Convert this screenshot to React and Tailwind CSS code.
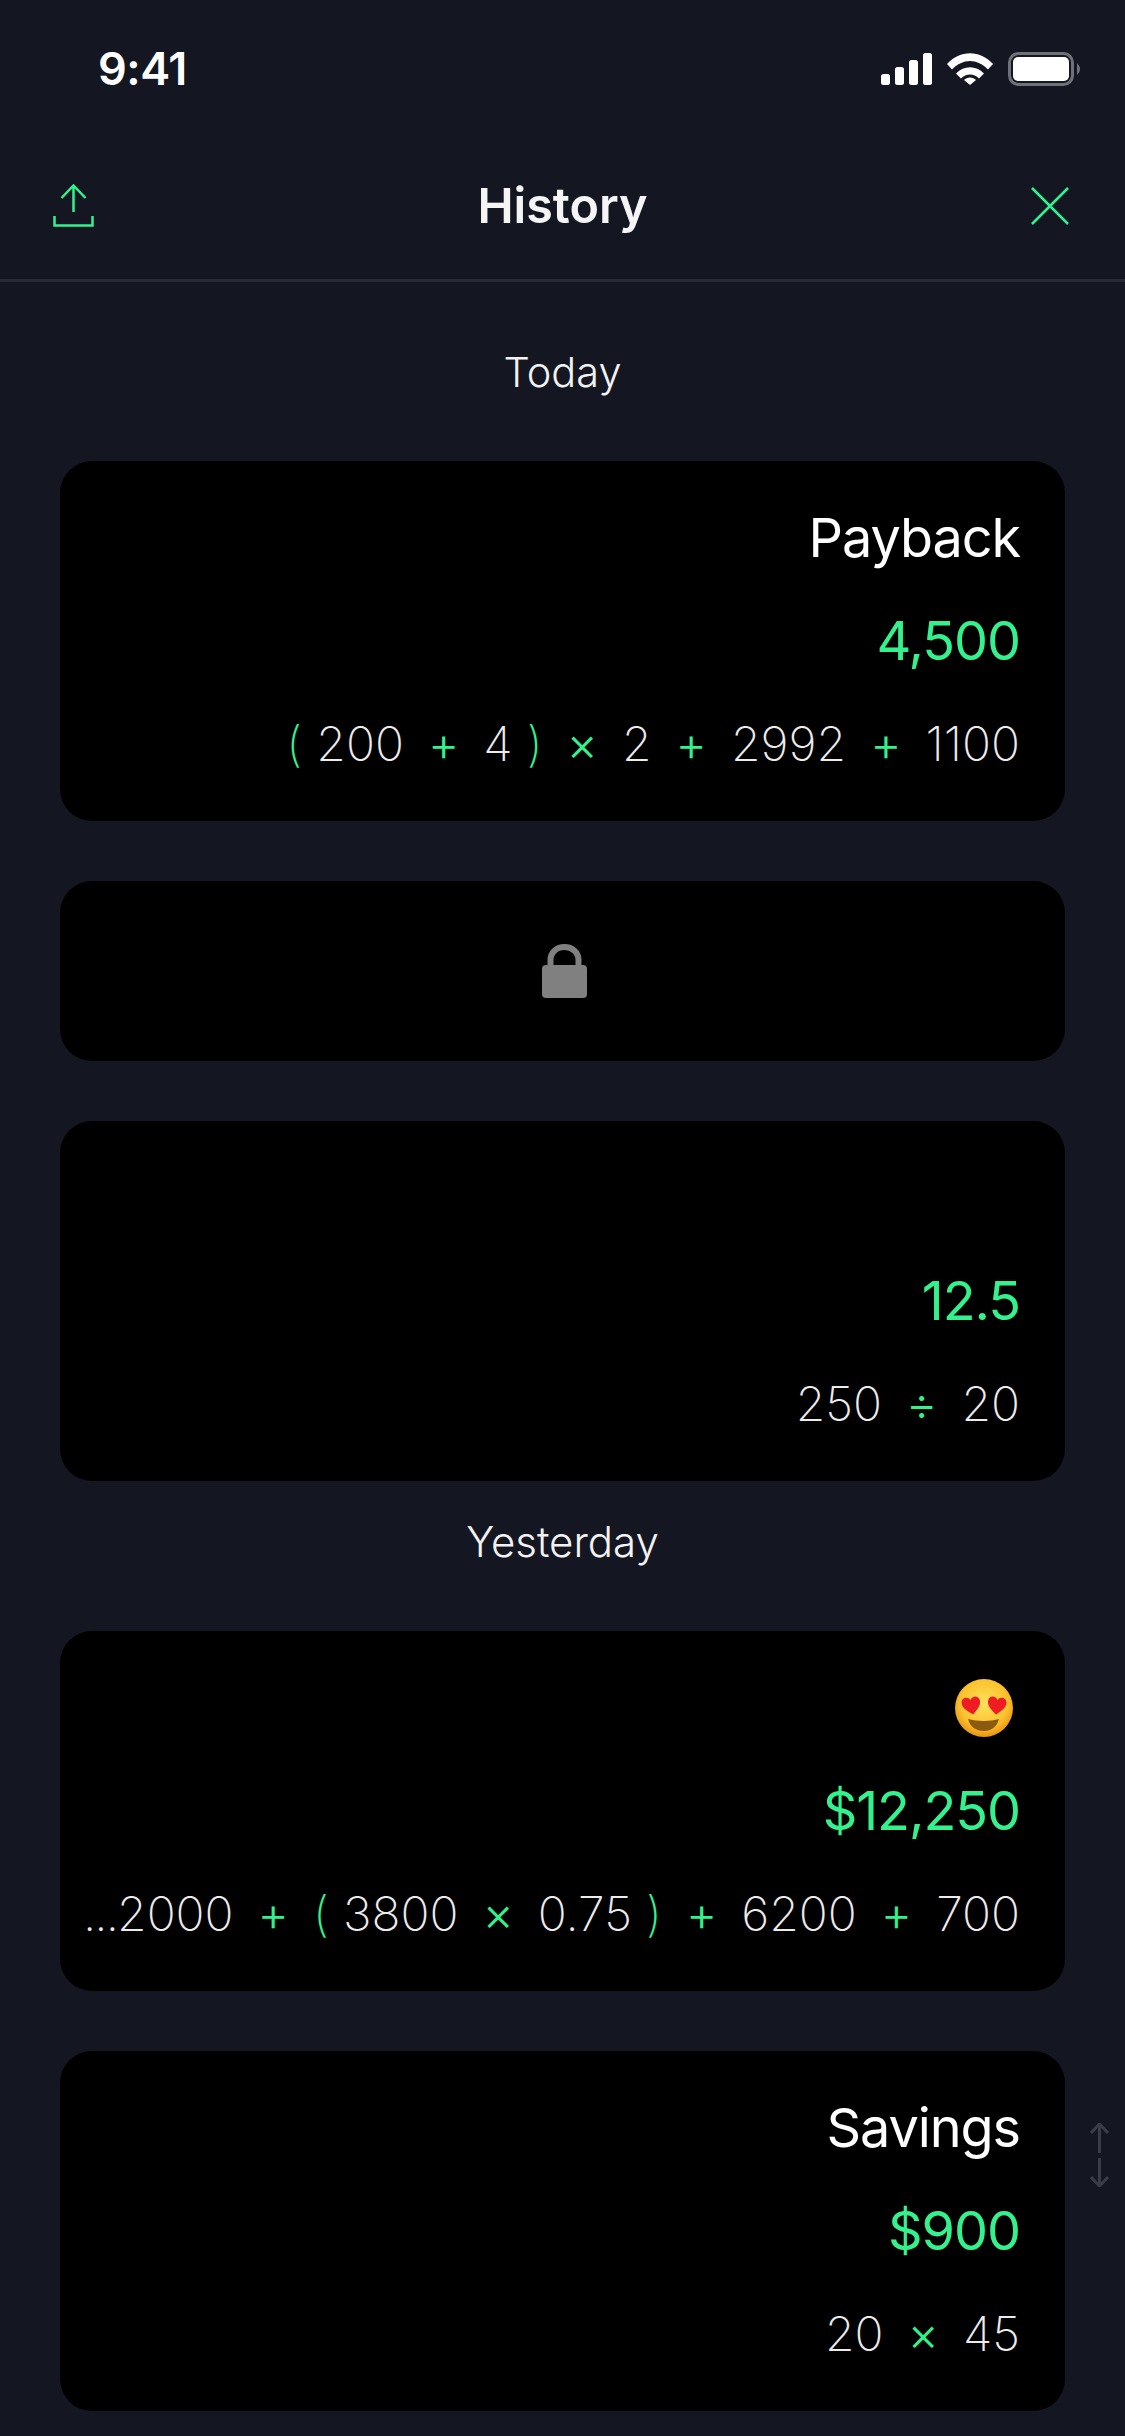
const GREEN = "#33f28e";

function StatusBar() {
  return (
    <div className="flex h-[130px] items-start justify-between pl-[98px] pr-[45px] pt-[42px]">
      <span className="text-[45px] font-semibold leading-[54px] tracking-[-0.01em] text-white">9:41</span>
      <div className="mt-[10px] flex items-start gap-[15px]">
        <svg className="mt-[1px]" width="51" height="32" viewBox="0 0 51 32" fill="#fff">
          <rect x="0" y="21" width="9" height="11" rx="2.500" />
          <rect x="14" y="14" width="9" height="18" rx="2.500" />
          <rect x="28" y="7" width="9" height="25" rx="2.500" />
          <rect x="42" y="0" width="9" height="32" rx="2.500" />
        </svg>
        <svg className="mt-[1px]" width="46" height="32" viewBox="0 0 46 32" fill="#fff">
          <path d="M0 11 C13 -3.500 33 -3.500 46 11 L41 16.500 C30 5 16 5 5 16.500 Z" />
          <path d="M9 20.500 C17 12 29 12 37 20.500 L32 25.500 C27 20 19 20 14 25.500 Z" />
          <path d="M23 32 L17 27 C20 23.500 26 23.500 29 27 Z" />
        </svg>
        <svg width="72" height="34" viewBox="0 0 72 34" fill="none">
          <rect x="1.500" y="1.500" width="63" height="31" rx="9" stroke="#6f7178" strokeWidth="3" />
          <rect x="5" y="5" width="56" height="24" rx="5" fill="#fff" />
          <path d="M69 11 C71 13 72 15 72 17 C72 19 71 21 69 23 Z" fill="#6f7178" />
        </svg>
      </div>
    </div>
  );
}

function NavBar() {
  return (
    <div className="flex h-[152px] items-center justify-between border-b-[3px] border-[#272b36] pl-[53px] pr-[56px] pt-[2px]">
      <svg width="41" height="43" viewBox="0 0 41 43" fill="none" stroke={GREEN} strokeWidth="2.500">
        <path d="M20.500 28 V1.500 M8.500 14 L20.500 1.500 L32.500 14" />
        <path d="M1.500 32 V41.500 H39.500 V32" />
      </svg>
      <span className="text-[48.5px] font-semibold leading-[60px] text-[#f5f5f5]">History</span>
      <svg width="38" height="38" viewBox="0 0 38 38" fill="none" stroke={GREEN} strokeWidth="2.500">
        <path d="M1 1 L37 37 M37 1 L1 37" />
      </svg>
    </div>
  );
}

function Lock() {
  return (
    <svg className="ml-[4px]" width="45" height="54" viewBox="0 0 45 54" fill="#808080">
      <path d="M8.500 24 V16 C8.500 8.500 14.500 3 22.500 3 C30.500 3 36.500 8.500 36.500 16 V24" fill="none" stroke="#808080" strokeWidth="6" />
      <rect x="0" y="21" width="45" height="33" rx="4" />
    </svg>
  );
}

function HeartEyes() {
  const heart = "M0 -5 C-3 -12 -14 -11 -14 -2 C-14 6 -6 11 1 17 C7 11 15 5 14 -3 C13 -11 3 -12 0 -5 Z";
  return (
    <svg className="mr-[7px]" width="58" height="58" viewBox="0 0 58 58">
      <defs>
        <radialGradient id="face" cx="50%" cy="42%" r="58%">
          <stop offset="0%" stopColor="#fde25a" />
          <stop offset="70%" stopColor="#fcc22e" />
          <stop offset="100%" stopColor="#e89512" />
        </radialGradient>
      </defs>
      <circle cx="29" cy="29" r="29" fill="url(#face)" />
      <path d={heart} transform="translate(16 24.500) rotate(-8) scale(0.66)" fill="#ef1c24" />
      <path d={heart} transform="translate(42 24.500) rotate(8) scale(0.66)" fill="#ef1c24" />
      <path d="M13 40 C22 42.500 36 42.500 44 40 C42 48 36 52 29 52 C21 52 15 48 13 40 Z" fill="#8b5a10" />
    </svg>
  );
}

function Expression({ parts }) {
  return (
    <div className="flex items-center gap-[24px] whitespace-nowrap text-[48px] font-extralight leading-[60px] text-[#ececec]">
      {parts.split(" ").map((part, i) => {
        if (part === "(") return <span key={i} className="-mr-[10px] text-[#33f28e]">(</span>;
        if (part === ")") return <span key={i} className="-ml-[10px] text-[#33f28e]">)</span>;
        if ("+×÷".includes(part)) return <span key={i} className="font-light text-[#33f28e]">{part}</span>;
        if (part.startsWith("...")) {
          return (
            <span key={i}>
              <span className="tracking-[-0.04em]">...</span>
              {part.slice(3)}
            </span>
          );
        }
        return <span key={i}>{part}</span>;
      })}
    </div>
  );
}

function HistoryCard({ title, emoji, value, expr }) {
  return (
    <div className="flex h-[360px] flex-col items-end rounded-[32px] bg-black px-[45px] pt-[25px]">
      <div className="flex h-[103px] items-center text-[54px] leading-none tracking-[-0.02em] text-white">
        {emoji ? <HeartEyes /> : title}
      </div>
      <div className="flex h-[103px] items-center text-[54px] leading-none tracking-[-0.02em] text-[#33f28e]">{value}</div>
      <div className="flex h-[103px] items-center">
        <Expression parts={expr} />
      </div>
    </div>
  );
}

export default function App() {
  return (
    <div className="relative h-[2436px] overflow-hidden bg-[#141721] font-['Inter',sans-serif]">
      <StatusBar />
      <NavBar />
      <div className="px-[60px]">
        <div className="pb-[59px] pt-[60px] text-center text-[41.5px] font-light leading-[60px] text-[#f2f2f2]">Today</div>
        <div className="flex flex-col gap-[60px]">
          <HistoryCard title="Payback" value="4,500" expr="( 200 + 4 ) × 2 + 2992 + 1100" />
          <div className="flex h-[180px] items-center justify-center rounded-[32px] bg-black">
            <Lock />
          </div>
          <HistoryCard value="12.5" expr="250 ÷ 20" />
        </div>
        <div className="pb-[59px] pt-[31px] text-center text-[42px] font-light leading-[60px] text-[#f2f2f2]">Yesterday</div>
        <div className="flex flex-col gap-[60px]">
          <HistoryCard emoji value="$12,250" expr="...2000 + ( 3800 × 0.75 ) + 6200 + 700" />
          <HistoryCard title="Savings" value="$900" expr="20 × 45" />
        </div>
      </div>
      <svg className="absolute left-[1090px] top-[2123px]" width="19" height="64" viewBox="0 0 19 64" fill="none" stroke="#3a3d47" strokeWidth="3">
        <path d="M9.500 1 V30 M1 10 L9.500 1 L18 10" />
        <path d="M9.500 35 V63 M1 54 L9.500 63 L18 54" />
      </svg>
    </div>
  );
}
